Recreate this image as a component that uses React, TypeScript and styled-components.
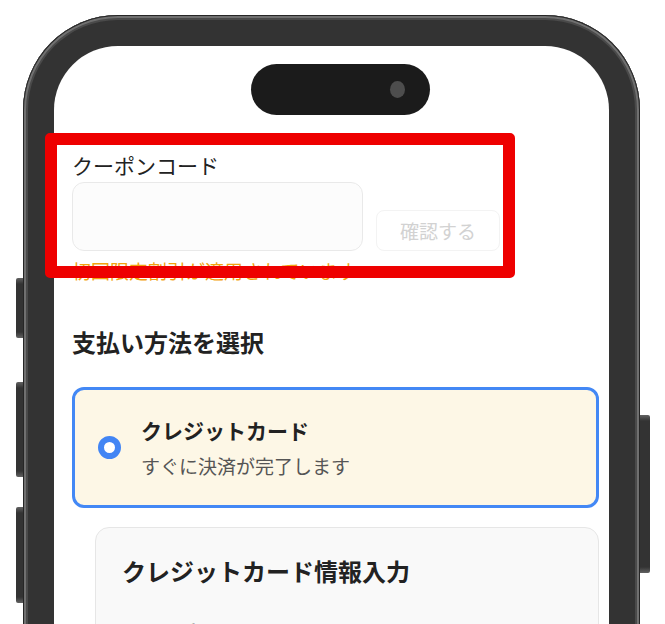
import React from "react";
import styled, { createGlobalStyle } from "styled-components";

const Global = createGlobalStyle`
  html, body { margin: 0; padding: 0; background: #fff; }
  body { font-family: "Noto Sans CJK JP", "Noto Sans", sans-serif; }
  * { box-sizing: border-box; }
`;

const Stage = styled.div`
  position: relative;
  width: 665px;
  height: 624px;
  overflow: hidden;
  background: #fff;
  padding: 15px 0 0 23px;
`;

const Phone = styled.div`
  position: relative;
  width: 617px;
  height: 720px;
  padding: 31px;
  border-radius: 95px;
  background: #333;
  box-shadow: inset 0 0 0 1px #262626, inset 0 0 0 3px #707070, inset 0 0 0 5px #4a4a4a;
`;

const SideButton = styled.div<{ $side: "left" | "right"; $top: number; $height: number }>`
  position: absolute;
  top: ${(p) => p.$top}px;
  height: ${(p) => p.$height}px;
  ${(p) =>
    p.$side === "left"
      ? "left: -7px; width: 7px; border-radius: 2px 0 0 2px;"
      : "right: -10px; width: 10px; border-radius: 0 2px 2px 0;"}
  background: linear-gradient(
    to bottom,
    #626262 0,
    #333 6px,
    #333 calc(100% - 6px),
    #626262 100%
  );
`;

const Screen = styled.div`
  height: 100%;
  background: #fff;
  border-radius: 64px;
  overflow: hidden;
  display: flex;
  flex-direction: column;
`;

const IslandBar = styled.div`
  display: flex;
  justify-content: center;
  padding-top: 18px;
`;

const Island = styled.div`
  width: 179px;
  height: 51px;
  margin-left: 18px;
  border-radius: 26px;
  background: #1b1b1b;
  display: flex;
  align-items: center;
  justify-content: flex-end;
  padding-right: 25px;
`;

const Lens = styled.div`
  width: 15px;
  height: 17px;
  border-radius: 50%;
  background: #4d4d4d;
`;

const Content = styled.div`
  padding: 35px 10px 0 18px;
  color: #222;
`;

const FieldLabel = styled.div`
  font-size: 21px;
  line-height: 30px;
  margin-bottom: 2px;
`;

const CouponRow = styled.div`
  display: flex;
  align-items: flex-end;
  gap: 13px;
`;

const CodeInput = styled.div`
  width: 291px;
  height: 69px;
  border: 1.5px solid #e9e9e9;
  border-radius: 12px;
  background: #fcfcfc;
`;

const ConfirmButton = styled.button`
  width: 124px;
  height: 41px;
  border: 1px solid #f3f3f3;
  border-radius: 8px;
  background: #fff;
  color: #d2d2d2;
  font-family: inherit;
  font-size: 19px;
  padding: 0;
`;

const Note = styled.div`
  margin-top: 6px;
  font-size: 19px;
  line-height: 28px;
  color: #f2a30f;
`;

const SectionTitle = styled.h2`
  margin: 40px 0 0;
  font-size: 24px;
  line-height: 34px;
  font-weight: 700;
`;

const MethodCard = styled.div`
  margin-top: 28px;
  border: 3px solid #4388f5;
  border-radius: 12px;
  background: #fdf7e6;
  padding: 25px 23px;
  display: flex;
  align-items: center;
  gap: 20px;
`;

const Radio = styled.div`
  width: 23px;
  height: 23px;
  flex: none;
  border-radius: 50%;
  border: 6px solid #4285f4;
  background: #fff;
`;

const MethodTitle = styled.div`
  font-size: 21px;
  line-height: 30px;
  font-weight: 700;
`;

const MethodSub = styled.div`
  margin-top: 7px;
  font-size: 19px;
  line-height: 28px;
  color: #555;
`;

const Panel = styled.div`
  margin: 19px 0 0 23px;
  border: 1px solid #e6e6e6;
  border-radius: 14px;
  background: #f9f9f9;
  padding: 26px 26px;
`;

const PanelTitle = styled.h3`
  margin: 0;
  font-size: 24px;
  line-height: 34px;
  font-weight: 700;
`;

const PanelLabel = styled.div`
  margin-top: 30px;
  font-size: 19px;
  line-height: 28px;
  color: #333;
`;

const Highlight = styled.div`
  position: absolute;
  left: 45px;
  top: 133px;
  width: 470px;
  height: 145px;
  border: 12px solid #ee0000;
  border-radius: 5px;
  pointer-events: none;
`;

export default function App() {
  return (
    <>
      <Global />
      <Stage>
        <Phone>
          <SideButton $side="left" $top={263} $height={60} />
          <SideButton $side="left" $top={367} $height={95} />
          <SideButton $side="left" $top={492} $height={96} />
          <SideButton $side="right" $top={400} $height={158} />
          <Screen>
            <IslandBar>
              <Island>
                <Lens />
              </Island>
            </IslandBar>
            <Content>
              <FieldLabel>クーポンコード</FieldLabel>
              <CouponRow>
                <CodeInput />
                <ConfirmButton>確認する</ConfirmButton>
              </CouponRow>
              <Note>初回限定割引が適用されています</Note>
              <SectionTitle>支払い方法を選択</SectionTitle>
              <MethodCard>
                <Radio />
                <div>
                  <MethodTitle>クレジットカード</MethodTitle>
                  <MethodSub>すぐに決済が完了します</MethodSub>
                </div>
              </MethodCard>
              <Panel>
                <PanelTitle>クレジットカード情報入力</PanelTitle>
                <PanelLabel>カード番号</PanelLabel>
              </Panel>
            </Content>
          </Screen>
        </Phone>
        <Highlight />
      </Stage>
    </>
  );
}
